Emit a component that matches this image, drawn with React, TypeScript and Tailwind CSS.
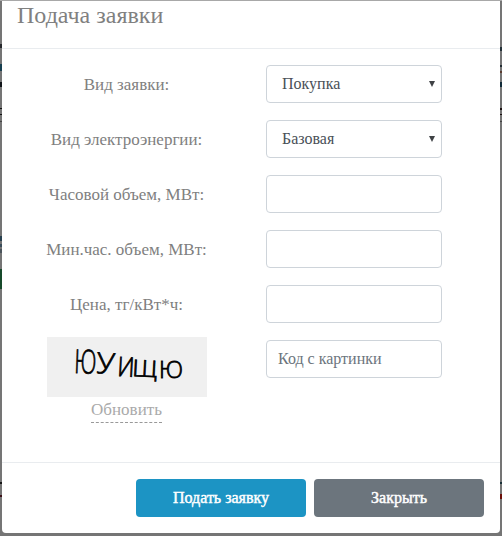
import { useState } from "react";

const inputClass =
  "block h-[38px] w-44 rounded border border-[#ced4da] bg-white text-base text-[#495057] outline-none";

const buttonClass =
  "h-[38px] w-[170px] rounded text-base [-webkit-text-stroke:0.45px_white]";

// bits of the dimmed page that stick out on both sides of the dialog
const backdropMarks = [
  { x: 0, y: 44, h: 4, color: "#26282c" },
  { x: 0, y: 64, h: 7, color: "#173f50" },
  { x: 0, y: 82, h: 5, color: "#101418" },
  { x: 0, y: 108, h: 1, color: "#111111" },
  { x: 0, y: 114, h: 1, color: "#111111" },
  { x: 0, y: 121, h: 1, color: "#444444" },
  { x: 0, y: 236, h: 5, color: "#27404f" },
  { x: 0, y: 244, h: 3, color: "#3a4d5a" },
  { x: 0, y: 249, h: 4, color: "#4b555c" },
  { x: 0, y: 269, h: 20, color: "#174a2b" },
  { x: 0, y: 482, h: 2, color: "#151515" },
  { x: 0, y: 495, h: 2, color: "#3c1018" },
  { x: 500, y: 47, h: 4, color: "#223037" },
  { x: 500, y: 65, h: 2, color: "#222c33" },
  { x: 500, y: 71, h: 2, color: "#5b3d30" },
  { x: 500, y: 82, h: 5, color: "#102a38" },
  { x: 500, y: 108, h: 2, color: "#1a1010" },
  { x: 500, y: 114, h: 1, color: "#1a1010" },
  { x: 500, y: 121, h: 1, color: "#444444" },
  { x: 500, y: 482, h: 2, color: "#183038" },
  { x: 500, y: 494, h: 5, color: "#6b0f08" },
];

const captchaLetters = [
  { char: "Ю", x: 27, y: 36, size: 33, width: 22, angle: 2 },
  { char: "У", x: 49, y: 36, size: 29, width: 18, angle: 4 },
  { char: "И", x: 70, y: 39, size: 27, width: 17, angle: 3 },
  { char: "Щ", x: 85, y: 39, size: 23, width: 25, angle: 3 },
  { char: "Ю", x: 112, y: 41, size: 24, width: 24, angle: 0 },
];

const Backdrop = () => (
  <svg className="absolute inset-0" width="502" height="536">
    <rect x="0" y="0" width="502" height="1" fill="#a8a8a8" />
    {backdropMarks.map((m, index) => (
      <rect key={index} x={m.x} y={m.y} width="2" height={m.h} fill={m.color} />
    ))}
  </svg>
);

const Captcha = () => (
  <svg width="160" height="60" className="block bg-[#f0f0f0]">
    {captchaLetters.map((l, index) => (
      <text
        key={index}
        x={l.x}
        y={l.y}
        fontFamily="'Open Sans', 'Noto Sans', sans-serif"
        fontSize={l.size}
        fontWeight="300"
        stroke="#000"
        strokeWidth="0.8"
        textLength={l.width}
        lengthAdjust="spacingAndGlyphs"
        transform={`rotate(${l.angle} ${l.x} ${l.y})`}
      >
        {l.char}
      </text>
    ))}
  </svg>
);

const Label = ({ text }: { text: string }) => (
  <div className="flex h-[38px] w-[219px] items-center justify-center pt-0.5 whitespace-nowrap">
    {text}
  </div>
);

const SelectRow = ({ label, options }: { label: string; options: string[] }) => {
  const [value, setValue] = useState(options[0]);

  return (
    <div className="flex gap-[30px]">
      <Label text={label} />
      <div className="relative">
        <select
          value={value}
          onChange={(e) => setValue(e.target.value)}
          className={`${inputClass} appearance-none pr-6 pl-[15px]`}
        >
          {options.map((o) => (
            <option key={o}>{o}</option>
          ))}
        </select>
        <svg
          className="pointer-events-none absolute top-4 right-[7px]"
          width="6"
          height="6"
          viewBox="0 0 6 6"
        >
          <path d="M0 0h6L3 6z" fill="#3f4245" />
        </svg>
      </div>
    </div>
  );
};

const InputRow = ({ label }: { label: string }) => (
  <div className="flex gap-[30px]">
    <Label text={label} />
    <input type="text" className={`${inputClass} px-3`} />
  </div>
);

const App = () => {
  return (
    <div className="relative h-[536px] w-[502px] overflow-hidden bg-[#757575] px-0.5 pt-px font-['Liberation_Serif',serif] text-[17px] text-[#808080]">
      <Backdrop />
      <div className="relative flex h-[532px] flex-col rounded-b bg-white">
        <div className="h-12 border-b border-[#e9ecef] pl-[15px]">
          <h5 className="text-2xl leading-[28px]">Подача заявки</h5>
        </div>

        <div className="flex flex-1 flex-col gap-[17px] pt-4 pl-[15px]">
          <SelectRow label="Вид заявки:" options={["Покупка", "Продажа"]} />
          <SelectRow label="Вид электроэнергии:" options={["Базовая", "Пиковая"]} />
          <InputRow label="Часовой объем, МВт:" />
          <InputRow label="Мин.час. объем, МВт:" />
          <InputRow label="Цена, тг/кВт*ч:" />
          <div className="flex gap-[30px]">
            <div className="-mt-[3px] flex w-[219px] flex-col items-center">
              <Captcha />
              <a href="#" className="mt-px border-b border-dashed border-[#999] leading-6 text-[#aaa]">
                Обновить
              </a>
            </div>
            <input
              type="text"
              placeholder="Код с картинки"
              className={`${inputClass} px-[11px] placeholder:text-[#6c757d]`}
            />
          </div>
        </div>

        <div className="flex h-[71px] justify-end gap-2 border-t border-[#e9ecef] pt-4 pr-4 text-white">
          <button className={`${buttonClass} bg-[#1c94c4]`}>Подать заявку</button>
          <button className={`${buttonClass} bg-[#6c757d]`}>Закрыть</button>
        </div>
      </div>
    </div>
  );
};

export default App;
